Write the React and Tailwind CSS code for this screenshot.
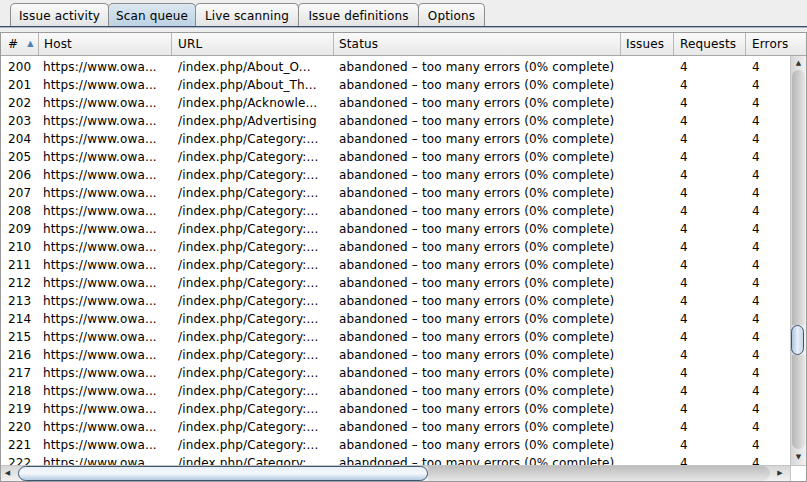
import React from 'react';

const tabs = [
  { label: 'Issue activity', w: 'w-[99px]' },
  { label: 'Scan queue', w: 'w-[88px]', active: true },
  { label: 'Live scanning', w: 'w-[104px]' },
  { label: 'Issue definitions', w: 'w-[121px]' },
  { label: 'Options', w: 'w-[67px]' },
];

const urls = {
  200: '/index.php/About_O...',
  201: '/index.php/About_Th...',
  202: '/index.php/Acknowle...',
  203: '/index.php/Advertising',
};

const rows = Array.from({ length: 23 }, (_, i) => 200 + i);

const cols = 'grid grid-cols-[38px_133px_162px_287px_53px_72px_44px]';

const App = () => {
  return (
    <div
      className="w-[807px] h-[482px] bg-[#eeeeee] flex flex-col overflow-hidden text-[12px] tracking-[0.15px] text-black"
      style={{ fontFamily: '"DejaVu Sans", "Liberation Sans", sans-serif' }}
    >
      {/* Tabs */}
      <div className="h-[26px] pl-[10px] flex items-end shrink-0">
        {tabs.map((t) => (
          <div
            key={t.label}
            className={`${t.w} h-[23px] -mr-px flex items-center justify-center pt-[1px] border border-b-0 border-[#8c8c8c] rounded-t-[5px] ${
              t.active
                ? 'bg-gradient-to-b from-[#dce8f2] to-[#bcd1e2]'
                : 'bg-gradient-to-b from-[#fafafa] to-[#e4e4e4]'
            }`}
          >
            {t.label}
          </div>
        ))}
      </div>
      <div className="h-px bg-[#3c4b68] shrink-0" />
      <div className="h-px bg-[#a9b4c6] shrink-0" />
      <div className="h-[4px] shrink-0" />

      {/* Table */}
      <div className="flex-1 flex flex-col border border-[#9b9b9b] bg-white min-h-0">
        {/* Header */}
        <div className="flex h-[23px] shrink-0 border-b border-[#a8a8a8] bg-gradient-to-b from-[#fafafa] to-[#e8e8e8]">
          <div className={`${cols} w-[789px]`}>
            <div className="flex items-center pl-[7px] border-r border-[#b8b8b8]">
              <span>#</span>
              <span className="ml-[9px] text-[8px] text-[#4d7fb5]">▲</span>
            </div>
            <div className="flex items-center pl-[5px] border-r border-[#b8b8b8]">Host</div>
            <div className="flex items-center pl-[6px] border-r border-[#b8b8b8]">URL</div>
            <div className="flex items-center pl-[5px] border-r border-[#b8b8b8]">Status</div>
            <div className="flex items-center pl-[5px] border-r border-[#b8b8b8]">Issues</div>
            <div className="flex items-center pl-[6px] border-r border-[#b8b8b8]">Requests</div>
            <div className="flex items-center pl-[6px]">Errors</div>
          </div>
          <div className="flex-1" />
        </div>

        {/* Body */}
        <div className="flex-1 flex min-h-0">
          <div className="w-[789px] overflow-hidden pt-[2px]">
            {rows.map((n) => (
              <div key={n} className={`${cols} h-[18px] items-center whitespace-nowrap`}>
                <div className="pl-[7px]">{n}</div>
                <div className="pl-[4px] overflow-hidden">https://www.owa...</div>
                <div className="pl-[6px] overflow-hidden">{urls[n] || '/index.php/Category:...'}</div>
                <div className="pl-[5px] overflow-hidden">abandoned – too many errors (0% complete)</div>
                <div />
                <div className="pl-[6px]">4</div>
                <div className="pl-[6px]">4</div>
              </div>
            ))}
          </div>

          {/* Vertical scrollbar */}
          <div className="flex-1 flex flex-col border-l border-[#c4c4c4] bg-gradient-to-r from-[#d6d6d6] to-[#f2f2f2]">
            <div className="h-[14px] flex items-center justify-center text-[7px] text-[#333]">▲</div>
            <div className="flex-1 mx-[1px] flex flex-col">
              <div className="flex-1 rounded-t-full bg-gradient-to-r from-[#b5b5b5] to-[#e6e6e6]" />
              <div className="h-[30px] -ml-[1px] mr-[1px] rounded-full border border-[#3f5673] bg-gradient-to-r from-[#a9c3dc] via-[#e6f0f8] to-[#c4d7e8]" />
              <div className="h-[94px] rounded-b-full bg-gradient-to-r from-[#b5b5b5] to-[#e6e6e6]" />
            </div>
            <div className="h-[16px] flex items-center justify-center text-[7px] text-[#333]">▼</div>
          </div>
        </div>

        {/* Horizontal scrollbar */}
        <div className="h-[16px] flex shrink-0 border-t border-[#c4c4c4]">
          <div className="w-[789px] flex bg-gradient-to-b from-[#d6d6d6] to-[#f2f2f2]">
            <div className="w-[13px] flex items-center justify-center text-[7px] text-[#333]">◀</div>
            <div className="flex-1 flex items-stretch">
              <div className="w-[410px] ml-[4px] rounded-full border border-[#3f5673] bg-gradient-to-b from-[#e8f0f8] via-[#f4f8fb] to-[#b4cbe0]" />
              <div className="flex-1 rounded-r-full bg-gradient-to-b from-[#bdbdbd] to-[#e6e6e6]" />
            </div>
            <div className="w-[20px] flex items-center justify-center text-[7px] text-[#333]">▶</div>
          </div>
          <div className="flex-1 bg-white border-l border-[#c4c4c4]" />
        </div>
      </div>
    </div>
  );
};

export default App;
